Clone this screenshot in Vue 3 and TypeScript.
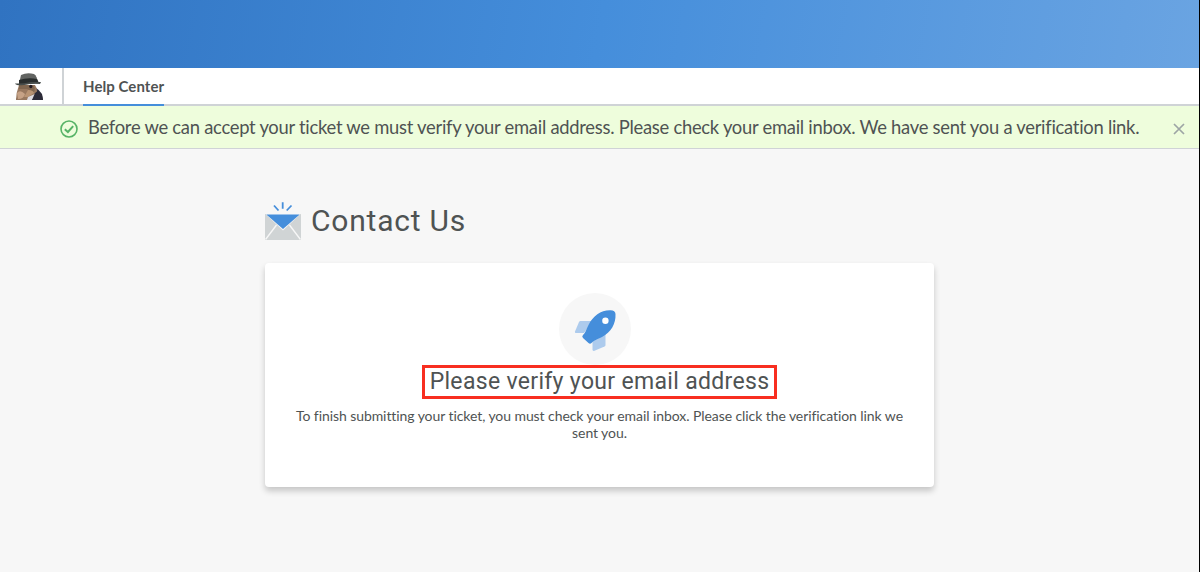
<script setup lang="ts">
const notice: string =
  'Before we can accept your ticket we must verify your email address. Please check your email inbox. We have sent you a verification link.'
</script>

<template>
  <div class="page">
    <header class="hero"></header>
    <nav class="nav">
      <div class="brand">
        <svg class="avatar" width="30" height="30" viewBox="0 0 30 30" aria-hidden="true">
          <path d="M2 29 L4 24 L22 17 Q28 20 29 29 Z" fill="#343443" />
          <path d="M2 29 Q2 22 5 14 L21 14 Q25 20 21 25 L16 29 Z" fill="#98785f" />
          <path d="M3 22 Q6 18 11 23 Q10 28 4 28 Z" fill="#c6a286" />
          <path d="M5 14 L19 14 Q22 18 20 21 L13 18 L5 18 Z" fill="#80664f" />
          <path d="M14 19 Q19 19 20 22 L14 26 L10 26 Z" fill="#b99474" />
          <ellipse cx="16.8" cy="15.5" rx="1.6" ry="1.8" fill="#211a20" />
          <path d="M14 26 L21 23 L22 25 L18 29 L13 29 Z" fill="#dedbdf" />
          <path d="M21 22 L24 20 L28 23 L29 29 L18 29 Z" fill="#2c2b38" />
          <path d="M5 13 L7 4 Q13 1 20 3 Q23 5 24 12 Z" fill="#626462" />
          <path d="M5 9 Q14 6 23 8 L25 12 L5 14 Z" fill="#292d2d" />
          <path d="M1 12.5 Q2 15 10 14 Q19 12 26 13 L27 11 Q22 11 17 11 Q8 13 1 12.5" fill="#454b49" />
        </svg>
      </div>
      <a class="tab">Help Center</a>
    </nav>
    <div class="notice">
      <svg class="check" width="18" height="18" viewBox="0 0 18 18" aria-hidden="true">
        <circle cx="9" cy="9" r="8" fill="none" stroke="#56b366" stroke-width="1.6" />
        <path d="M4.8 9.3 L7.9 12 L13.2 6.2" fill="none" stroke="#56b366" stroke-width="2" />
      </svg>
      <span class="notice-text">{{ notice }}</span>
      <svg class="close" width="12" height="12" viewBox="0 0 12 12" aria-hidden="true">
        <path d="M1 1 L11 11 M11 1 L1 11" stroke="#9da5a5" stroke-width="1.7" />
      </svg>
    </div>
    <main class="content">
      <div class="title-row">
        <svg class="mail" width="36" height="38" viewBox="0 0 36 38" aria-hidden="true">
          <path d="M0 12 H36 V38 H0 Z" fill="#d0d4d5" />
          <path d="M0.5 37.5 L11.5 23 M35.5 37.5 L24.5 23" stroke="#f7f7f7" stroke-width="1.4" />
          <path d="M0 11.5 L18 28.5 L36 11.5" fill="#f7f7f7" />
          <path d="M1.3 12.5 H34.7 L18 27 Z" fill="#458edb" />
          <path d="M17.7 0.3 V6.8 M9 3.5 L13.5 8.5 M26.5 3.5 L21.7 8.5" stroke="#458edb" stroke-width="1.8" />
        </svg>
        <h1 class="title">Contact Us</h1>
      </div>
      <section class="card">
        <svg class="rocket" width="72" height="72" viewBox="0 0 72 72" aria-hidden="true">
          <circle cx="36" cy="36" r="36" fill="#f7f7f7" />
          <path d="M21.5 28 H34 L25 40 H17 Q15.5 40 16 38.5 L20 29 Q20.5 28 21.5 28 Z" fill="#adcbed" />
          <path d="M33.5 48 L46.5 40 V52 Q46.5 53 45.5 53.5 L35.5 57.8 Q33.5 58.5 33.5 56.5 Z" fill="#adcbed" />
          <path d="M24 42 C27 39 27 37 29.5 32 C34 23 42 17 51.5 17.3 Q56.3 17.5 56.5 21 C57 31 52 39 43 44 C37 47 34.5 47.5 32.5 50 Q31 51.5 29.5 50 L24 45 Q22.5 43.5 24 42 Z" fill="#458edb" />
          <circle cx="46.4" cy="27.7" r="3.2" fill="#fff" />
        </svg>
        <h2 class="headline">Please verify your email address</h2>
        <p class="body">
          To finish submitting your ticket, you must check your email inbox. Please click the verification link we
          sent you.
        </p>
      </section>
    </main>
  </div>
</template>

<style>
body {
  margin: 0;
}
</style>

<style scoped>
.page {
  box-sizing: border-box;
  height: 572px;
  overflow: hidden;
  border-right: 1px solid #000;
  background: #f7f7f7;
  color: #4f5353;
  font-family: Lato, sans-serif;
}
.hero {
  height: 68px;
  background: linear-gradient(100deg, #3073c1 0%, #458edb 50%, #6aa4e2 100%);
}
.nav {
  box-sizing: border-box;
  display: flex;
  height: 38px;
  border-bottom: 2px solid #cfd3d6;
  background: #fff;
}
.brand {
  box-sizing: border-box;
  width: 64px;
  height: 36px;
  padding: 3px 0 0 14px;
  border-right: 2px solid #cfd3d6;
}
.avatar {
  display: block;
}
.tab {
  box-sizing: border-box;
  height: 38px;
  margin-left: 19px;
  border-bottom: 2px solid #458edb;
  font-size: 15px;
  font-weight: 700;
  letter-spacing: 0.06px;
  line-height: 37px;
  white-space: nowrap;
}
.notice {
  box-sizing: border-box;
  display: flex;
  align-items: center;
  height: 43px;
  padding: 0 14.5px 0 60px;
  border-bottom: 1px solid #cfd3d6;
  background: #eefddc;
}
.check {
  flex: none;
  margin: 3px 10px 0 0;
}
.notice-text {
  font-size: 18.4px;
  letter-spacing: -0.268px;
  line-height: 41px;
  white-space: nowrap;
}
.close {
  flex: none;
  margin: 4px 0 0 auto;
}
.content {
  width: 669px;
  margin: 0 auto 0 265px;
}
.title-row {
  display: flex;
  align-items: flex-start;
  gap: 10px;
  height: 61px;
  padding-top: 53px;
}
.title {
  margin: 0;
  font: 400 30px/38px Roboto, sans-serif;
  letter-spacing: 0.78px;
}
.card {
  box-sizing: border-box;
  height: 224px;
  padding: 30px 30px 0;
  border-radius: 4px;
  background: #fff;
  box-shadow: 0 4px 6px rgba(0, 0, 0, 0.2);
  text-align: center;
}
.rocket {
  display: block;
  margin: 0 auto 0 263.5px;
}
.headline {
  box-sizing: border-box;
  width: 355px;
  height: 34px;
  margin: 0 auto 0 127px;
  border: 3px solid #f82e20;
  font: 400 23px/27px Roboto, sans-serif;
  letter-spacing: 0.32px;
  white-space: nowrap;
}
.body {
  margin: 8px 0 0;
  font-size: 14px;
  letter-spacing: -0.075px;
  line-height: 17px;
}
</style>
